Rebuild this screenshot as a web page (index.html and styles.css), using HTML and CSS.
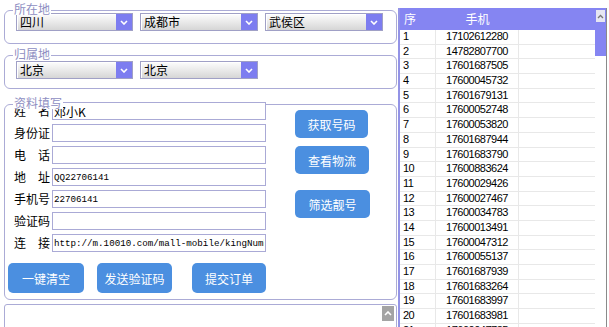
FILE: index.html
```html
<!DOCTYPE html>
<html lang="zh-CN">
<head>
  <meta charset="UTF-8">
  <title>号码下单</title>
  <link rel="stylesheet" href="styles.css">
</head>
<body>
  <div class="app">
    <div class="left">
      <!-- 所在地 -->
      <div class="group group-loc">
        <span class="group-title">所在地</span>
        <div class="combo-row">
          <div class="combo w117"><span class="combo-text">四川</span><i class="combo-btn"><svg width="8" height="5" viewBox="0 0 8 5"><polyline points="1,1 4,4 7,1" fill="none" stroke="#fff" stroke-width="1.6"/></svg></i></div>
          <div class="combo w118"><span class="combo-text">成都市</span><i class="combo-btn"><svg width="8" height="5" viewBox="0 0 8 5"><polyline points="1,1 4,4 7,1" fill="none" stroke="#fff" stroke-width="1.6"/></svg></i></div>
          <div class="combo w118"><span class="combo-text">武侯区</span><i class="combo-btn"><svg width="8" height="5" viewBox="0 0 8 5"><polyline points="1,1 4,4 7,1" fill="none" stroke="#fff" stroke-width="1.6"/></svg></i></div>
        </div>
      </div>

      <!-- 归属地 -->
      <div class="group group-home">
        <span class="group-title">归属地</span>
        <div class="combo-row">
          <div class="combo w117"><span class="combo-text">北京</span><i class="combo-btn"><svg width="8" height="5" viewBox="0 0 8 5"><polyline points="1,1 4,4 7,1" fill="none" stroke="#fff" stroke-width="1.6"/></svg></i></div>
          <div class="combo w118"><span class="combo-text">北京</span><i class="combo-btn"><svg width="8" height="5" viewBox="0 0 8 5"><polyline points="1,1 4,4 7,1" fill="none" stroke="#fff" stroke-width="1.6"/></svg></i></div>
        </div>
      </div>

      <!-- 资料填写 -->
      <div class="group group-form">
        <span class="group-title">资料填写</span>
        <div class="form-body">
          <div class="fields">
            <div class="field-row"><span class="field-label">姓名</span><input class="field-input" value="邓小K"></div>
            <div class="field-row"><span class="field-label">身份证</span><input class="field-input" value=""></div>
            <div class="field-row"><span class="field-label">电话</span><input class="field-input" value=""></div>
            <div class="field-row"><span class="field-label">地址</span><input class="field-input mono" value="QQ22706141"></div>
            <div class="field-row"><span class="field-label">手机号</span><input class="field-input mono" value="22706141"></div>
            <div class="field-row"><span class="field-label">验证码</span><input class="field-input" value=""></div>
            <div class="field-row"><span class="field-label">连接</span><input class="field-input mono" value="http://m.10010.com/mall-mobile/kingNumber/init.htm"></div>
          </div>
          <div class="side-btns">
            <button class="btn btn-get">获取号码</button>
            <button class="btn btn-track">查看物流</button>
            <button class="btn btn-pick">筛选靓号</button>
          </div>
        </div>
        <div class="bottom-btns">
          <button class="btn btn-clear">一键清空</button>
          <button class="btn btn-send">发送验证码</button>
          <button class="btn btn-submit">提交订单</button>
        </div>
      </div>

      <div class="log">
        <i class="log-up"><svg width="8" height="5" viewBox="0 0 8 5"><polyline points="1,4 4,1 7,4" fill="none" stroke="#fff" stroke-width="1.6"/></svg></i>
      </div>
    </div>

    <div class="list">
      <div class="grid">
        <div class="grid-head"><span>序</span><span class="c2">手机</span><span></span></div>
        <div id="rows"></div>
      </div>
      <div class="vscroll">
        <div class="vscroll-top"><i class="vscroll-up"><svg width="7" height="5" viewBox="0 0 7 5"><polyline points="1,4 3.5,1.5 6,4" fill="none" stroke="#777" stroke-width="1.3"/></svg></i></div>
        <div class="vscroll-thumb"></div>
      </div>
    </div>
  </div>

  <script>
    const phones = [
      "17102612280", "14782807700", "17601687505", "17600045732", "17601679131",
      "17600052748", "17600053820", "17601687944", "17601683790", "17600883624",
      "17600029426", "17600027467", "17600034783", "17600013491", "17600047312",
      "17600055137", "17601687939", "17601683264", "17601683997", "17601683981",
      "17600047735"
    ];
    const rowsDiv = document.getElementById('rows');
    phones.forEach((p, i) => {
      const row = document.createElement('div');
      row.className = 'grid-row';
      row.innerHTML = `<span>${i + 1}</span><span class="c2">${p}</span><span></span>`;
      rowsDiv.appendChild(row);
    });
  </script>
</body>
</html>
```

FILE: styles.css
```css
body {
  margin: 0;
  background: #fff;
  font-family: "Noto Sans CJK SC", "Liberation Sans", sans-serif;
  font-size: 12px;
  color: #000;
  overflow: hidden;
}
.app {
  display: flex;
  height: 327px;
}
.left {
  width: 398px;
  flex: none;
  padding-top: 10px;
  box-sizing: border-box;
}
.group {
  position: relative;
  margin-left: 4px;
  width: 393px;
  border: 1px solid #ababd6;
  border-radius: 6px;
  box-sizing: border-box;
}
.group-title {
  position: absolute;
  top: -8px;
  left: 8px;
  padding: 0 1px;
  background: #fff;
  color: #8e8ec2;
  font-size: 12px;
  line-height: 12px;
}
.group-loc {
  padding: 2px 0 12px 11px;
}
.group-home {
  margin-top: 11px;
  padding: 5px 0 9px 11px;
}
.group-form {
  margin-top: 15px;
  padding: 0 0 6px 0;
}
.combo-row {
  display: flex;
  gap: 7px;
}
.combo {
  display: flex;
  height: 18px;
  box-sizing: border-box;
  border: 1px solid #a0a0c6;
  box-shadow: inset 1px 1px 0 #fff;
  background: linear-gradient(#fdfdfd, #d6d6d6);
}
.w117 { width: 117px; }
.w118 { width: 118px; }
.combo-text {
  flex: 1;
  padding-left: 3px;
  line-height: 16px;
}
.combo-btn {
  width: 16px;
  background: #7d7df0;
  display: flex;
  align-items: center;
  justify-content: center;
}
.form-body {
  display: flex;
  margin-top: -3px;
}
.fields {
  margin-left: 9px;
  width: 252px;
}
.field-row {
  display: flex;
  align-items: center;
  height: 18px;
  margin-bottom: 4px;
}
.field-row:last-child {
  margin-bottom: 0;
}
.field-label {
  width: 36px;
  margin-right: 2px;
  text-align-last: justify;
  line-height: 18px;
}
.field-input {
  width: 214px;
  height: 18px;
  box-sizing: border-box;
  border: 1px solid #aaaad6;
  padding: 0 1px;
  font: 12px "Noto Sans CJK SC", sans-serif;
  color: #000;
  outline: none;
}
.field-input.mono {
  font: 9.2px "Liberation Mono", monospace;
}
.side-btns {
  display: flex;
  flex-direction: column;
  align-items: flex-start;
  margin-left: 29px;
  padding-top: 8px;
}
.btn {
  height: 28px;
  border: none;
  border-radius: 5px;
  background: #4b8fe0;
  color: #fff;
  font: 12px "Noto Sans CJK SC", sans-serif;
  padding: 0;
  cursor: pointer;
}
.btn-get { width: 73px; }
.btn-track { width: 74px; margin-top: 8px; }
.btn-pick { width: 75px; margin-top: 16px; }
.bottom-btns {
  display: flex;
  padding-left: 3px;
  margin-top: 11px;
}
.bottom-btns .btn {
  height: 30px;
}
.btn-clear { width: 76px; }
.btn-send { width: 75px; margin-left: 13px; }
.btn-submit { width: 74px; margin-left: 20px; }
.log {
  margin: 4px 0 0 4px;
  width: 393px;
  height: 30px;
  box-sizing: border-box;
  border: 1px solid #ababd6;
  border-radius: 3px 3px 0 0;
  display: flex;
  justify-content: flex-end;
  padding: 1px 2px 0 0;
}
.log-up {
  width: 12px;
  height: 15px;
  background: #a4a4a4;
  display: flex;
  align-items: center;
  justify-content: center;
}
.list {
  width: 209px;
  flex: none;
  margin-top: 8px;
  display: flex;
  border-left: 2px solid #9393e6;
  box-sizing: border-box;
  overflow: hidden;
}
.grid {
  flex: 1;
}
.grid-head {
  display: grid;
  grid-template-columns: 36px 83px 1fr;
  height: 22px;
  line-height: 22px;
  background: #8585f2;
  color: #fff;
}
.grid-head span:first-child {
  padding-left: 4px;
}
.grid-row {
  display: grid;
  grid-template-columns: 36px 83px 1fr;
  height: 14.7px;
  line-height: 14px;
  box-sizing: border-box;
  border-bottom: 1px solid #e8e8e8;
  font: 11px "Liberation Sans", sans-serif;
  letter-spacing: -0.5px;
}
.grid-row span {
  border-right: 1px solid #e8e8e8;
}
.grid-row span:first-child {
  padding-left: 3px;
}
.grid-row span:last-child {
  border-right: none;
}
.c2 {
  text-align: center;
}
.vscroll {
  width: 12px;
  border-right: 1px solid #8a8a8a;
  box-sizing: border-box;
  display: flex;
  flex-direction: column;
}
.vscroll-top {
  height: 16px;
  background: #8585f2;
  padding: 2px 1px 0;
  box-sizing: border-box;
}
.vscroll-up {
  height: 12px;
  background: #e6e6f2;
  display: flex;
  align-items: center;
  justify-content: center;
}
.vscroll-thumb {
  height: 32px;
  background: #8585f2;
}
```
